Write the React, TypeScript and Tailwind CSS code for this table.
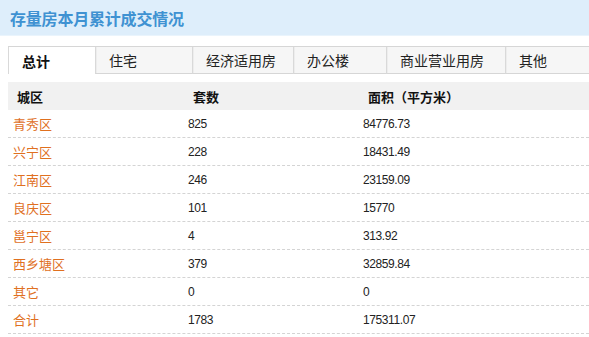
import React from "react";

const tabs = [
  { label: "总计", w: "w-[87px]", active: true },
  { label: "住宅", w: "w-[97px]" },
  { label: "经济适用房", w: "w-[101px]" },
  { label: "办公楼", w: "w-[93px]" },
  { label: "商业营业用房", w: "w-[119px]" },
  { label: "其他", w: "flex-1" },
];

const rows: [string, string, string][] = [
  ["青秀区", "825", "84776.73"],
  ["兴宁区", "228", "18431.49"],
  ["江南区", "246", "23159.09"],
  ["良庆区", "101", "15770"],
  ["邕宁区", "4", "313.92"],
  ["西乡塘区", "379", "32859.84"],
  ["其它", "0", "0"],
  ["合计", "1783", "175311.07"],
];

const cjk = "font-['Noto_Sans_CJK_SC',sans-serif]";

export default function App() {
  return (
    <div className={`w-[589px] h-[337px] bg-white overflow-hidden ${cjk}`}>
      <div className="h-[36px] bg-[#deeefb] border-b border-[#eaf4fc] flex items-center pl-[10px]">
        <span className="text-[16px] font-bold text-[#3f92d2] leading-none tracking-[-0.2px]">
          存量房本月累计成交情况
        </span>
      </div>
      <div className="pl-[8px] pt-[10px]">
        <div className="flex h-[28px] border-t border-[#d6d6d6]">
          {tabs.map((t, i) => (
            <div
              key={i}
              className={`${t.w} h-full flex items-center pl-[13px] text-[14px] leading-none border-l border-[#d9d9d9] ${
                t.active
                  ? "bg-white font-bold text-[#111]"
                  : "bg-[#f6f6f6] text-[#222] border-b border-b-[#d6d6d6] shadow-[inset_1px_0_0_#ededed]"
              }`}
            >
              {t.label}
            </div>
          ))}
        </div>
        <div className="mt-[8px] h-[28px] bg-[#f1f1f1] flex items-center text-[13px] font-bold text-[#111] leading-none">
          <div className="w-[180px] pl-[9px]">城区</div>
          <div className="w-[175px] pl-[5px]">套数</div>
          <div className="flex-1 pl-[5px]">面积（平方米）</div>
        </div>
        {rows.map((r, i) => (
          <div
            key={i}
            className="h-[28px] flex items-center border-b border-dashed border-[#d4d4d4] leading-none"
          >
            <div className="w-[180px] pl-[5px] text-[13px] text-[#e0701f]">{r[0]}</div>
            <div className="w-[175px] font-['Liberation_Sans',sans-serif] text-[12px] tracking-[-0.4px] text-[#222]">
              {r[1]}
            </div>
            <div className="flex-1 font-['Liberation_Sans',sans-serif] text-[12px] tracking-[-0.4px] text-[#222]">
              {r[2]}
            </div>
          </div>
        ))}
      </div>
    </div>
  );
}
